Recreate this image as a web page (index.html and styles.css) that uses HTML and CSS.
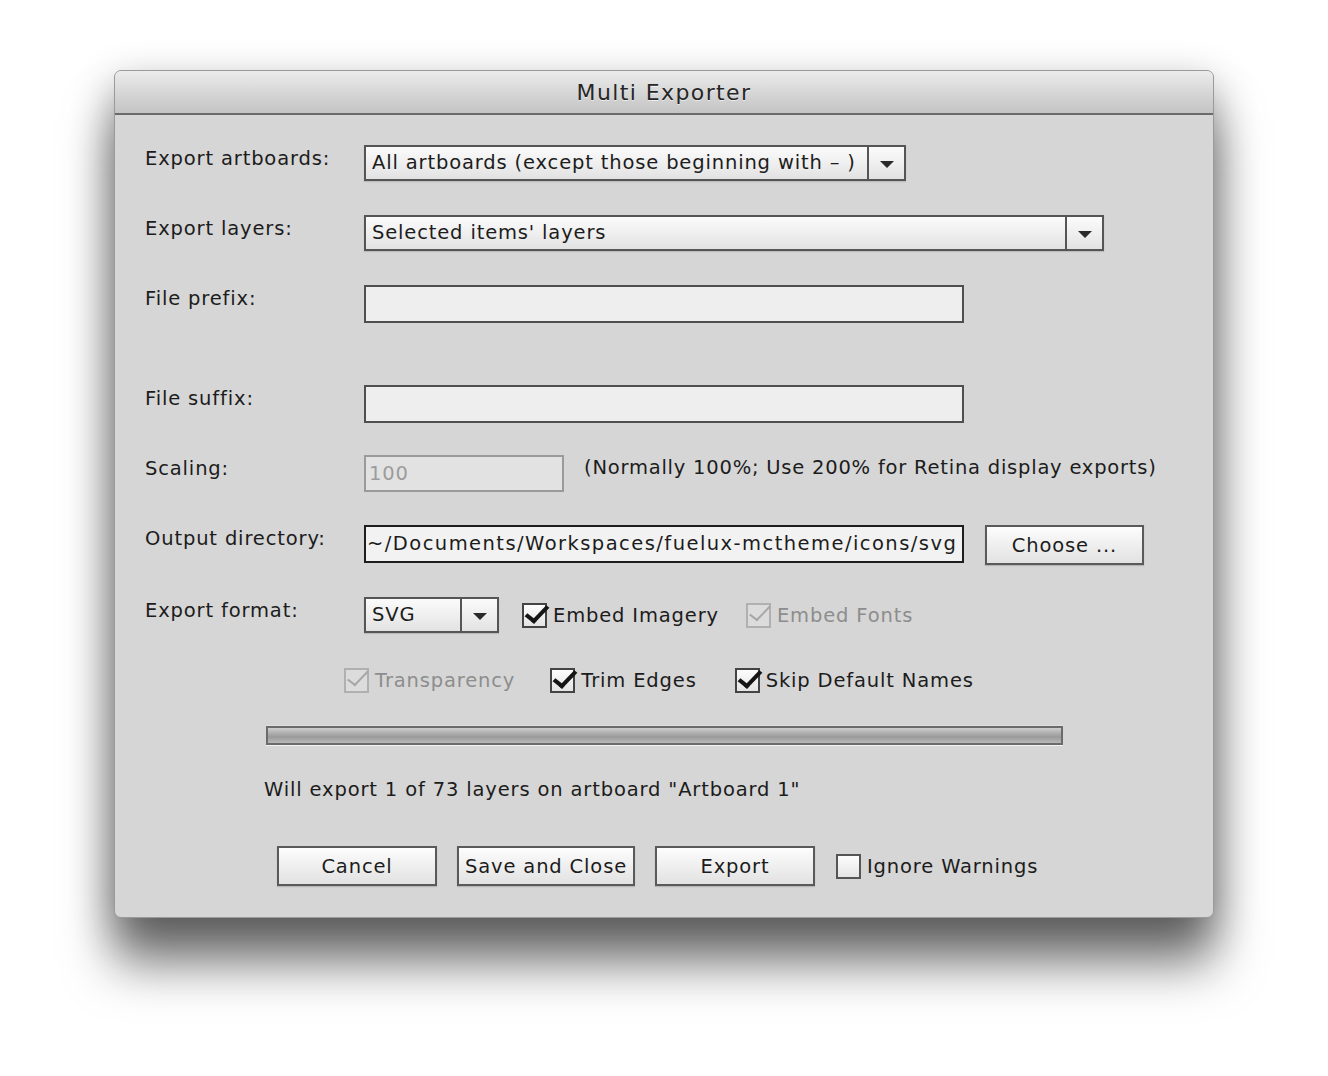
FILE: index.html
```html
<!DOCTYPE html>
<html>
<head>
<meta charset="utf-8">
<title>Multi Exporter</title>
<link rel="stylesheet" href="styles.css">
</head>
<body>
<div class="dialog">
  <div class="titlebar">Multi Exporter</div>
  <div class="content">
    <div class="row r1">
      <div class="label">Export artboards:</div>
      <div class="select w-artboards"><span class="sel-text">All artboards (except those beginning with – )</span><span class="sel-arrow"><i></i></span></div>
    </div>
    <div class="row r2">
      <div class="label">Export layers:</div>
      <div class="select w-layers"><span class="sel-text">Selected items' layers</span><span class="sel-arrow"><i></i></span></div>
    </div>
    <div class="row r3">
      <div class="label">File prefix:</div>
      <div class="input w-wide"></div>
    </div>
    <div class="row r4">
      <div class="label">File suffix:</div>
      <div class="input w-wide"></div>
    </div>
    <div class="row r5">
      <div class="label">Scaling:</div>
      <div class="input disabled w-scale">100</div>
      <div class="hint">(Normally 100%; Use 200% for Retina display exports)</div>
    </div>
    <div class="row r6">
      <div class="label">Output directory:</div>
      <div class="input dark w-wide">~/Documents/Workspaces/fuelux-mctheme/icons/svg</div>
      <div class="button choose">Choose ...</div>
    </div>
    <div class="row r7">
      <div class="label">Export format:</div>
      <div class="select w-format"><span class="sel-text">SVG</span><span class="sel-arrow"><i></i></span></div>
      <div class="check on first"><span class="box"></span>Embed Imagery</div>
      <div class="check on dis gap"><span class="box"></span>Embed Fonts</div>
    </div>
    <div class="row r8">
      <div class="check on dis"><span class="box"></span>Transparency</div>
      <div class="check on gap"><span class="box"></span>Trim Edges</div>
      <div class="check on gap"><span class="box"></span>Skip Default Names</div>
    </div>
    <div class="progress"></div>
    <div class="status">Will export 1 of 73 layers on artboard "Artboard 1"</div>
    <div class="row buttons">
      <div class="button b-cancel">Cancel</div>
      <div class="button b-save">Save and Close</div>
      <div class="button b-export">Export</div>
      <div class="check plain"><span class="box"></span>Ignore Warnings</div>
    </div>
  </div>
</div>
</body>
</html>
```
FILE: styles.css
```css
html, body {
  margin: 0;
  padding: 0;
  background: #ffffff;
}
body {
  padding-top: 70px;
  height: 1006px;
  overflow: hidden;
  font-family: "DejaVu Sans", "Noto Sans", sans-serif;
  font-size: 19.5px;
  letter-spacing: 0.85px;
  color: #1c1c1c;
}
.dialog {
  margin-left: 114px;
  width: 1100px;
  height: 848px;
  box-sizing: border-box;
  background: #d6d6d6;
  border: 1px solid #9a9a9a;
  border-radius: 7px;
  box-shadow: 0 46px 50px rgba(0,0,0,0.52), 0 12px 40px rgba(0,0,0,0.3);
  overflow: hidden;
}
.titlebar {
  height: 42px;
  line-height: 44px;
  text-align: center;
  font-size: 22px;
  letter-spacing: 1.4px;
  color: #262626;
  background: linear-gradient(#ececec, #d3d3d3 60%, #c4c4c4);
  border-bottom: 2px solid #6a6a6a;
  text-shadow: 0 1px 0 rgba(255,255,255,0.6);
}
.content {
  padding: 30px 0 0 30px;
}
.row {
  display: flex;
  align-items: center;
}
.label {
  width: 219px;
  flex: none;
  align-self: flex-start;
  padding-top: 2px;
}
.r1 { height: 36px; }
.r2 { height: 36px; margin-top: 34px; }
.r3 { height: 38px; margin-top: 34px; }
.r4 { height: 38px; margin-top: 62px; }
.r5 { height: 37px; margin-top: 32px; }
.r6 { height: 38px; margin-top: 33px; }
.r7 { height: 36px; margin-top: 34px; }
.r8 { height: 26px; margin-top: 34px; padding-left: 199px; }

.select {
  box-sizing: border-box;
  height: 36px;
  display: flex;
  border: 2px solid #555;
  background: linear-gradient(#fbfbfb, #eeeeee 55%, #e2e2e2);
  box-shadow: 0 1px 1px rgba(0,0,0,0.12);
}
.sel-text {
  flex: 1;
  padding-left: 6px;
  line-height: 31px;
  white-space: nowrap;
  overflow: hidden;
}
.sel-arrow {
  width: 35px;
  flex: none;
  border-left: 2px solid #555;
  display: flex;
  align-items: center;
  justify-content: center;
}
.sel-arrow i {
  display: block;
  width: 0;
  height: 0;
  border-left: 7px solid transparent;
  border-right: 7px solid transparent;
  border-top: 7px solid #2a2a2a;
  margin-top: 2px;
}
.w-artboards { width: 542px; }
.w-layers { width: 740px; }
.w-format { width: 135px; }

.input {
  box-sizing: border-box;
  height: 38px;
  border: 2px solid #4f4f4f;
  background: #eeeeee;
  padding-left: 1px;
  line-height: 33px;
  white-space: nowrap;
  overflow: hidden;
}
.input.dark { border-color: #1e1e1e; background: #f2f2f2; letter-spacing: 1.45px; }
.input.disabled {
  border-color: #9a9a9a;
  background: #e2e2e2;
  color: #9c9c9c;
  height: 37px;
  padding-left: 3px;
}
.w-wide { width: 600px; }
.w-scale { width: 200px; }
.hint {
  margin-left: 20px;
  align-self: flex-start;
  padding-top: 1px;
  white-space: nowrap;
  letter-spacing: 0.78px;
}

.button {
  box-sizing: border-box;
  height: 40px;
  border: 2px solid #5a5a5a;
  background: linear-gradient(#fdfdfd, #efefef 50%, #e2e2e2);
  display: flex;
  align-items: center;
  justify-content: center;
  box-shadow: 0 1px 1px rgba(0,0,0,0.15);
  white-space: nowrap;
}
.choose { width: 159px; margin-left: 21px; margin-top: 2px; }

.check {
  display: flex;
  align-items: center;
  white-space: nowrap;
}
.check .box {
  position: relative;
  box-sizing: border-box;
  width: 25px;
  height: 25px;
  margin-right: 6px;
  border: 2px solid #444;
  background: linear-gradient(#fdfdfd, #e4e4e4);
  flex: none;
}
.check.on .box::after {
  content: "";
  position: absolute;
  left: 7px;
  top: -4px;
  width: 8px;
  height: 18px;
  border-right: 4px solid #151515;
  border-bottom: 4px solid #151515;
  transform: rotate(38deg) skewX(-6deg);
}
.check.dis { color: #8d8d8d; }
.check.dis .box { border-color: #b0b0b0; background: #dcdcdc; }
.check.dis .box::after { border-color: #a6a6a6; border-right-width: 2px; border-bottom-width: 2px; }
.check.first { margin-left: 23px; }
.r8 .check.gap { margin-left: 35px; }
.r8 .check.gap + .check.gap { margin-left: 38px; }
.r7 .check.gap { margin-left: 27px; }

.progress {
  margin: 33px 0 0 121px;
  width: 797px;
  height: 19px;
  box-sizing: border-box;
  border: 2px solid #6b6b6b;
  background: linear-gradient(#cfcfcf, #b2b2b2 30%, #9a9a9a 60%, #b9b9b9);
  box-shadow: 0 1px 0 #f3f3f3, 0 -1px 0 #e0e0e0;
}
.status {
  margin: 33px 0 0 119px;
  white-space: nowrap;
}
.buttons {
  margin-top: 45px;
  padding-left: 132px;
}
.b-cancel { width: 160px; }
.b-save { width: 178px; margin-left: 20px; }
.b-export { width: 160px; margin-left: 20px; }
.check.plain { margin-left: 21px; }
.check.plain .box { border-color: #555; }
```
